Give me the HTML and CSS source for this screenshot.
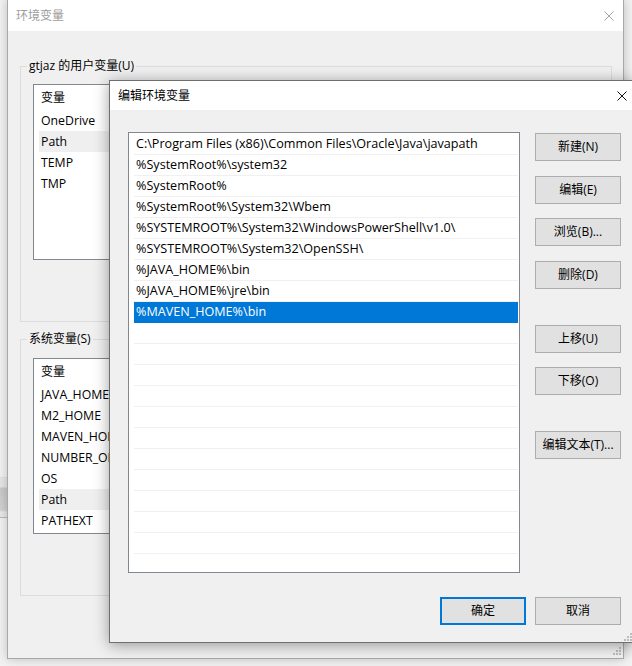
FILE: index.html
```html
<!DOCTYPE html>
<html lang="zh-CN">
<head>
<meta charset="utf-8">
<title>编辑环境变量</title>
<link rel="stylesheet" href="styles.css">
</head>
<body>
<div class="desktop">
  <div class="behind-strip"></div>

  <section class="window window-back">
    <header class="titlebar titlebar-back">
      <span class="title">环境变量</span>
      <svg class="close-icon" width="10" height="10" viewBox="0 0 10 10"><path d="M0.5 0.5L9.5 9.5M9.5 0.5L0.5 9.5"/></svg>
    </header>
    <div class="back-body">
      <fieldset class="group group-user">
        <legend>gtjaz 的用户变量(U)</legend>
        <div class="varlist">
          <div class="varhead">变量</div>
          <div class="varrow">OneDrive</div>
          <div class="varrow varrow-hl">Path</div>
          <div class="varrow">TEMP</div>
          <div class="varrow">TMP</div>
        </div>
      </fieldset>
      <fieldset class="group group-sys">
        <legend>系统变量(S)</legend>
        <div class="varlist">
          <div class="varhead">变量</div>
          <div class="varrow">JAVA_HOME</div>
          <div class="varrow">M2_HOME</div>
          <div class="varrow">MAVEN_HOME</div>
          <div class="varrow">NUMBER_OF_PROCESSORS</div>
          <div class="varrow">OS</div>
          <div class="varrow varrow-hl">Path</div>
          <div class="varrow">PATHEXT</div>
        </div>
      </fieldset>
    </div>
    <svg class="grip grip-back" width="8" height="8" viewBox="0 0 8 8"><rect x="6" y="0" width="2" height="2"/><rect x="3" y="3" width="2" height="2"/><rect x="6" y="3" width="2" height="2"/><rect x="0" y="6" width="2" height="2"/><rect x="3" y="6" width="2" height="2"/><rect x="6" y="6" width="2" height="2"/></svg>
  </section>

  <section class="window window-front">
    <header class="titlebar titlebar-front">
      <span class="title">编辑环境变量</span>
      <svg class="close-icon" width="10" height="10" viewBox="0 0 10 10"><path d="M0.5 0.5L9.5 9.5M9.5 0.5L0.5 9.5"/></svg>
    </header>
    <div class="front-body">
      <div class="pathlist">
        <div class="pathrow">C:\Program Files (x86)\Common Files\Oracle\Java\javapath</div>
        <div class="pathrow">%SystemRoot%\system32</div>
        <div class="pathrow">%SystemRoot%</div>
        <div class="pathrow">%SystemRoot%\System32\Wbem</div>
        <div class="pathrow">%SYSTEMROOT%\System32\WindowsPowerShell\v1.0\</div>
        <div class="pathrow">%SYSTEMROOT%\System32\OpenSSH\</div>
        <div class="pathrow">%JAVA_HOME%\bin</div>
        <div class="pathrow">%JAVA_HOME%\jre\bin</div>
        <div class="pathrow pathrow-sel">%MAVEN_HOME%\bin</div>
        <div class="pathrow"></div>
        <div class="pathrow"></div>
        <div class="pathrow"></div>
        <div class="pathrow"></div>
        <div class="pathrow"></div>
        <div class="pathrow"></div>
        <div class="pathrow"></div>
        <div class="pathrow"></div>
        <div class="pathrow"></div>
        <div class="pathrow"></div>
        <div class="pathrow"></div>
        <div class="pathrow"></div>
      </div>
      <div class="side-buttons">
        <button class="btn">新建(N)</button>
        <button class="btn btn-gap15">编辑(E)</button>
        <button class="btn btn-gap14">浏览(B)...</button>
        <button class="btn btn-gap15">删除(D)</button>
        <button class="btn btn-gap36">上移(U)</button>
        <button class="btn btn-gap14">下移(O)</button>
        <button class="btn btn-gap36">编辑文本(T)...</button>
      </div>
      <div class="footer">
        <button class="btn btn-default">确定</button>
        <button class="btn">取消</button>
      </div>
    </div>
    <svg class="grip grip-front" width="8" height="8" viewBox="0 0 8 8"><rect x="6" y="0" width="2" height="2"/><rect x="3" y="3" width="2" height="2"/><rect x="6" y="3" width="2" height="2"/><rect x="0" y="6" width="2" height="2"/><rect x="3" y="6" width="2" height="2"/><rect x="6" y="6" width="2" height="2"/></svg>
  </section>
</div>
</body>
</html>
```
FILE: styles.css
```css
* { box-sizing: border-box; }

html, body {
  margin: 0;
  padding: 0;
}

body {
  font-family: "Open Sans", "Noto Sans CJK SC", sans-serif;
  font-size: 12px;
  color: #000;
  background: #f2f2f2;
}

.desktop {
  position: relative;
  width: 632px;
  height: 666px;
  overflow: hidden;
  background: #f2f2f2;
}

.behind-strip {
  position: absolute;
  left: 0;
  top: 477px;
  width: 8px;
  height: 41px;
  border-top: 1px solid #e2e2e2;
  border-bottom: 1px solid #b8b8b8;
  background: linear-gradient(#e6e6e6 0, #e6e6e6 9px, #c9c9c9 10px, #d2d2d2 32px, #e8e8e8 34px);
}

/* windows */
.window {
  position: absolute;
  background: #f0f0f0;
}

.window-back {
  left: 7px;
  top: -1px;
  width: 617px;
  height: 660px;
  border: 1px solid #a8a8a8;
  box-shadow: 0 0 10px rgba(0, 0, 0, 0.22);
}

.window-front {
  left: 109px;
  top: 80px;
  width: 526px;
  height: 563px;
  border: 1px solid #6f6f6f;
  box-shadow: 0 2px 14px rgba(0, 0, 0, 0.38);
}

.titlebar {
  display: flex;
  align-items: center;
  justify-content: space-between;
  background: #fff;
}

.titlebar-back {
  height: 31px;
  padding: 0 9px 0 8px;
  color: #9d9d9d;
}

.titlebar-front {
  height: 29px;
  padding: 0 7px 0 8px;
  color: #000;
}

.title {
  line-height: 16px;
}

.close-icon {
  display: block;
  fill: none;
  stroke-width: 1;
}

.titlebar-back .close-icon { stroke: #a4a4a4; }
.titlebar-front .close-icon { stroke: #111; }

/* background window */
.back-body {
  padding: 27px 11px 0 12px;
}

.group {
  margin: 0;
  border: 1px solid #dcdcdc;
  padding: 10px 12px 61px 12px;
  min-width: 0;
}

.group legend {
  padding: 0 2px;
  margin-left: -6px;
  line-height: 16px;
  color: #000;
}

.group-sys {
  margin-top: 9px;
  padding-top: 11px;
}

.varlist {
  height: 176px;
  border: 1px solid #828790;
  background: #fff;
  padding-left: 5px;
  overflow: hidden;
}

.varhead {
  height: 25px;
  line-height: 25px;
  padding-left: 2px;
}

.varrow {
  height: 21px;
  line-height: 21px;
  padding-left: 2px;
  font-size: 12.3px;
  white-space: nowrap;
}

.varrow-hl {
  background: #efefef;
}

.grip {
  position: absolute;
  fill: #bdbdbd;
}

.grip-back {
  right: 2px;
  bottom: 3px;
}

.grip-front {
  right: 2px;
  bottom: 1px;
}

/* front dialog */
.front-body {
  display: grid;
  grid-template-columns: 392px 86px;
  grid-template-rows: 441px 28px;
  column-gap: 15px;
  row-gap: 24px;
  padding: 22px 12px 17px 18px;
}

.pathlist {
  border: 1px solid #828790;
  background: #fff;
  padding-top: 1px;
  overflow: hidden;
}

.pathrow {
  height: 21px;
  line-height: 20px;
  margin: 0 1px 0 5px;
  padding-left: 2px;
  border-bottom: 1px solid #f0f0f0;
  font-size: 12.6px;
  white-space: nowrap;
}

.pathrow-sel {
  background: #0078d7;
  border-bottom-color: #0078d7;
  color: #fff;
}

.side-buttons {
  display: flex;
  flex-direction: column;
  padding-top: 1px;
}

.btn {
  width: 86px;
  height: 28px;
  margin: 0;
  padding: 0;
  border: 1px solid #adadad;
  background: #e1e1e1;
  font: inherit;
  color: #000;
  text-align: center;
  line-height: 26px;
}

.btn-gap14 { margin-top: 14px; }
.btn-gap15 { margin-top: 15px; }
.btn-gap36 { margin-top: 36px; }

.btn-default {
  border: 2px solid #0078d7;
  line-height: 24px;
}

.footer {
  grid-column: 1 / -1;
  display: flex;
  justify-content: flex-end;
  gap: 9px;
}
```
